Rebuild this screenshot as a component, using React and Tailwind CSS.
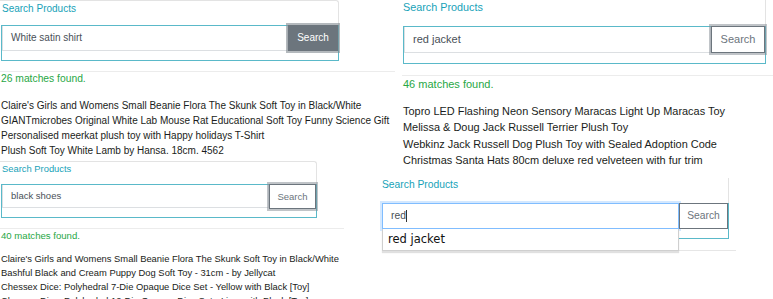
export default function App() {
  const p1 = [
    "Claire's Girls and Womens Small Beanie Flora The Skunk Soft Toy in Black/White",
    "GIANTmicrobes Original White Lab Mouse Rat Educational Soft Toy Funny Science Gift",
    "Personalised meerkat plush toy with Happy holidays T-Shirt",
    "Plush Soft Toy White Lamb by Hansa. 18cm. 4562",
  ];
  const p2 = [
    "Topro LED Flashing Neon Sensory Maracas Light Up Maracas Toy",
    "Melissa & Doug Jack Russell Terrier Plush Toy",
    "Webkinz Jack Russell Dog Plush Toy with Sealed Adoption Code",
    "Christmas Santa Hats 80cm deluxe red velveteen with fur trim",
  ];
  const p3 = [
    "Claire's Girls and Womens Small Beanie Flora The Skunk Soft Toy in Black/White",
    "Bashful Black and Cream Puppy Dog Soft Toy - 31cm - by Jellycat",
    "Chessex Dice: Polyhedral 7-Die Opaque Dice Set - Yellow with Black [Toy]",
    "Chessex Dice: Polyhedral 12-Die Opaque Dice Set - Lime with Black [Toy]",
  ];

  return (
    <div className="relative w-[773px] h-[299px] overflow-hidden bg-white font-[family-name:Liberation_Sans,Arial,sans-serif] text-[#1a1d20]">
      {/* Panel 1 */}
      <div className="absolute left-0 top-0 w-[395px]">
        <div className="w-[339px] h-[25px] border-t border-r border-[#e3e3e3] rounded-tr-[3px] pl-[2px] text-[10px] leading-[16px] text-[#17a2b8]">
          Search Products
        </div>
        <div className="ml-[1px] w-[338px] h-[36px] border border-[#5ab9c9]">
          <div className="flex h-[25px]">
            <div className="flex-1 border border-t-0 border-[#dcdfe2] pl-[8px] text-[10px] leading-[24px] text-[#495057]">
              White satin shirt
            </div>
            <div className="w-[50px] h-[26px] -mt-[1px] bg-[#6c757d] text-white text-[10px] leading-[26px] text-center shadow-[0_0_0_2px_rgba(130,138,145,0.6)]">
              Search
            </div>
          </div>
        </div>
        <div className="mt-[10px] border-t border-[#ececec] pl-[1px]">
          <div className="text-[10.3px] leading-[14px] text-[#28a745]">26 matches found.</div>
          <div className="mt-[12px] text-[10px] leading-[15px] whitespace-nowrap">
            {p1.map((t) => (
              <div key={t}>{t}</div>
            ))}
          </div>
        </div>
      </div>

      {/* Panel 3 */}
      <div className="absolute left-0 top-[161px] w-[344px]">
        <div className="w-[317px] h-[23px] border-t border-r border-[#e3e3e3] rounded-tr-[3px] pl-[2px] text-[9.4px] leading-[14px] text-[#17a2b8]">
          Search Products
        </div>
        <div className="ml-[1px] w-[316px] h-[34px] border border-[#5ab9c9]">
          <div className="flex h-[23px]">
            <div className="flex-1 border border-t-0 border-[#dcdfe2] pl-[8px] text-[9.5px] leading-[22px] text-[#495057]">
              black shoes
            </div>
            <div className="w-[47px] h-[25px] -mt-[1px] bg-white border border-[#6c757d] text-[#6c757d] text-[9.5px] leading-[23px] text-center shadow-[0_0_0_2px_rgba(130,138,145,0.5)]">
              Search
            </div>
          </div>
        </div>
        <div className="mt-[10px] border-t border-[#ececec] pl-[1px]">
          <div className="text-[9.6px] leading-[13px] text-[#28a745]">40 matches found.</div>
          <div className="mt-[10px] text-[9.4px] leading-[14px] whitespace-nowrap">
            {p3.map((t) => (
              <div key={t}>{t}</div>
            ))}
          </div>
        </div>
      </div>

      {/* Panel 2 */}
      <div className="absolute left-[402px] top-0 w-[371px]">
        <div className="w-[364px] h-[26px] border-r border-[#e3e3e3] pl-[1px] text-[10.8px] leading-[14px] text-[#17a2b8]">
          Search Products
        </div>
        <div className="ml-[1px] w-[363px] h-[38px] border border-[#5ab9c9]">
          <div className="flex h-[26px]">
            <div className="flex-1 border border-t-0 border-[#dcdfe2] pl-[8px] text-[11px] leading-[25px] text-[#495057]">
              red jacket
            </div>
            <div className="w-[54px] h-[27px] -mt-[1px] bg-white border border-[#6c757d] text-[#6c757d] text-[11px] leading-[25px] text-center shadow-[0_0_0_2px_rgba(130,138,145,0.5)]">
              Search
            </div>
          </div>
        </div>
        <div className="mt-[11px] border-t border-[#ececec] pl-[1px]">
          <div className="text-[11px] leading-[16px] text-[#28a745]">46 matches found.</div>
          <div className="mt-[11px] text-[10.95px] leading-[16.4px] whitespace-nowrap">
            {p2.map((t) => (
              <div key={t}>{t}</div>
            ))}
          </div>
        </div>
      </div>

      {/* Panel 4 */}
      <div className="absolute left-[382px] top-[178px] w-[354px]">
        <div className="w-[347px] h-[25px] border-r border-[#e3e3e3] text-[10.3px] leading-[14px] text-[#17a2b8]">
          Search Products
        </div>
        <div className="relative w-[347px] h-[36px] border-r border-b border-[#5ab9c9]">
          <div className="flex h-[26px]">
            <div className="w-[297px] border border-[#80bdff] shadow-[0_0_0_2px_rgba(128,189,255,0.35)] pl-[8px] text-[10.3px] leading-[24px] text-[#495057]">
              red<span className="inline-block w-px h-[12px] bg-[#333] align-middle"></span>
            </div>
            <div className="w-[49px] h-[26px] bg-white border border-[#6c757d] text-[#6c757d] text-[10.3px] leading-[24px] text-center">
              Search
            </div>
          </div>
          <div className="absolute left-0 top-[26px] w-[297px] h-[22px] bg-white border border-t-0 border-[#cfcfcf] shadow-[0_2px_1px_rgba(0,0,0,0.12)] pl-[5px] font-[family-name:DejaVu_Sans,sans-serif] text-[11.5px] leading-[21px] text-[#111]">
            red jacket
          </div>
        </div>
        <div className="mt-[11px] border-t border-[#e6e6e6]"></div>
      </div>
    </div>
  );
}
